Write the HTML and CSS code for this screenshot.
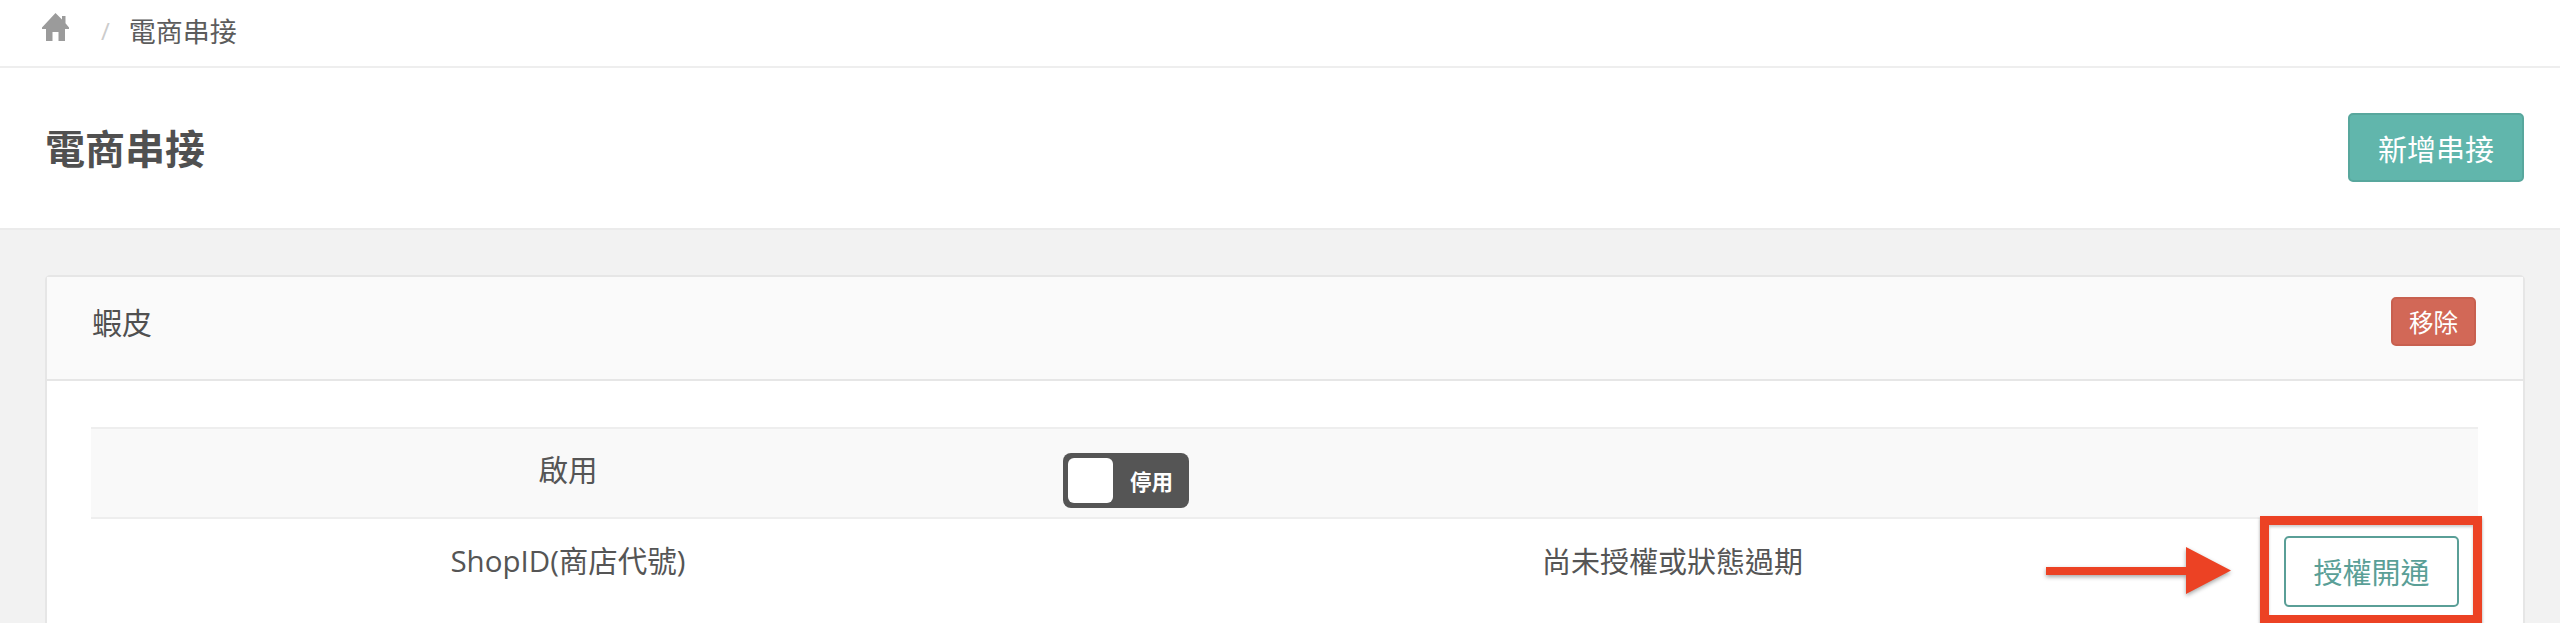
FILE: index.html
```html
<!DOCTYPE html>
<html lang="zh-TW">
<head>
    <meta charset="UTF-8">
    <meta name="viewport" content="width=device-width, initial-scale=1.0">
    <title>電商串接</title>
    <link rel="stylesheet" href="styles.css">
</head>
<body>
    <nav class="breadcrumb">
        <svg class="home-icon" viewBox="0 0 27 28" aria-hidden="true">
            <path d="M13.5 0 L20 6.6 V3 H23.5 V10.2 L27 14.5 V16 H23 V28 H16.5 V19 H10.5 V28 H4 V16 H0 V14.5 Z"/>
        </svg>
        <span class="crumb-sep">/</span>
        <span class="crumb-current">電商串接</span>
    </nav>

    <header class="page-head">
        <h1>電商串接</h1>
        <button class="btn btn-add">新增串接</button>
    </header>

    <main class="content">
        <section class="card">
            <div class="card-head">
                <span class="card-title">蝦皮</span>
                <button class="btn btn-remove">移除</button>
            </div>
            <div class="card-body">
                <div class="row row-striped">
                    <div class="cell-label">啟用</div>
                    <div class="cell-toggle">
                        <span class="toggle"><span class="toggle-knob"></span><span class="toggle-text">停用</span></span>
                    </div>
                </div>
                <div class="row">
                    <div class="cell-label cell-raised">ShopID(商店代號)</div>
                    <div class="cell-status cell-raised">尚未授權或狀態過期</div>
                    <div class="cell-action"><button class="btn btn-auth">授權開通</button></div>
                </div>
            </div>
        </section>
    </main>

    <!-- annotation drawn over the screenshot -->
    <svg class="note-arrow" viewBox="0 0 186 48" aria-hidden="true">
        <path d="M0 20 H140 V0 L185 23.5 L140 47 V28 H0 Z"/>
    </svg>
    <div class="note-box"></div>
</body>
</html>
```

FILE: styles.css
```css
html, body {
    margin: 0;
    padding: 0;
}
body {
    position: relative;
    height: 623px;
    overflow: hidden;
    background-color: #f2f2f2;
    color: #555;
    font-family: "Open Sans", "Noto Sans CJK TC", sans-serif;
}
button {
    font-family: inherit;
}

.breadcrumb {
    display: flex;
    align-items: center;
    height: 60px;
    padding: 0 0 6px 42px;
    background-color: #fff;
    border-bottom: 2px solid #eee;
}
.home-icon {
    width: 27px;
    height: 28px;
    margin-top: -6px;
    fill: #9b9b9b;
}
.crumb-sep {
    margin-left: 32px;
    color: #ccc;
    font-size: 24px;
}
.crumb-current {
    margin-left: 19px;
    font-size: 27px;
    color: #5c5c5c;
}

.page-head {
    display: flex;
    align-items: center;
    justify-content: space-between;
    height: 160px;
    padding: 0 36px 0 45px;
    background-color: #fff;
    border-bottom: 2px solid #ebebeb;
}
.page-head h1 {
    margin: 0 0 2px;
    font-size: 40px;
    font-weight: 600;
    color: #505050;
}

.btn {
    box-sizing: border-box;
    border-radius: 5px;
    cursor: pointer;
}
.btn-add {
    width: 176px;
    height: 69px;
    margin-top: -1px;
    background-color: #61b6ac;
    border: 2px solid #58a79d;
    color: #fff;
    font-size: 29px;
}
.btn-remove {
    width: 85px;
    height: 49px;
    background-color: #d26857;
    border: 2px solid #c8604f;
    color: #fff;
    font-size: 24.5px;
}
.btn-auth {
    width: 175px;
    height: 71px;
    background-color: #fff;
    border: 2px solid #5a9f97;
    color: #5a9f97;
    font-size: 29px;
}

.content {
    padding: 45px 35px 0 45px;
}
.card {
    background-color: #fff;
    border: 2px solid #e6e6e6;
    border-radius: 5px;
}
.card-head {
    display: flex;
    align-items: center;
    justify-content: space-between;
    height: 88px;
    padding: 0 47px 14px 45px;
    background-color: #fafafa;
    border-bottom: 2px solid #e6e6e6;
}
.card-title {
    font-size: 30px;
    color: #505050;
}
.card-body {
    padding: 46px 45px 0 44px;
}

.row {
    display: grid;
    grid-template-columns: 954px 1fr 210px;
    align-items: center;
    height: 104px;
    border-bottom: 2px solid #eee;
    font-size: 29.5px;
    color: #555;
}
.row-striped {
    height: 88px;
    background-color: #f9f9f9;
    border-top: 2px solid #eee;
}
.cell-label {
    text-align: center;
}
.cell-raised {
    margin-top: -23px;
}
.cell-status {
    padding-left: 32px;
    text-align: center;
    font-size: 29px;
}
.cell-action {
    display: flex;
    justify-content: flex-end;
    padding-right: 19px;
}
.cell-toggle {
    padding-left: 18px;
}
.row-striped .cell-label {
    margin-top: -9px;
}

.toggle {
    display: flex;
    align-items: center;
    box-sizing: border-box;
    width: 126px;
    height: 55px;
    padding-left: 5px;
    margin-top: 14px;
    background-color: #555;
    border-radius: 8px;
}
.toggle-knob {
    width: 45px;
    height: 45px;
    background-color: #fff;
    border-radius: 6px;
}
.toggle-text {
    margin-left: 17px;
    color: #fff;
    font-size: 21.5px;
    font-weight: 600;
}

.note-arrow {
    position: absolute;
    left: 2046px;
    top: 547px;
    width: 186px;
    height: 48px;
    fill: #ec4224;
    filter: drop-shadow(0 2px 2px rgba(0, 0, 0, 0.35));
}
.note-box {
    position: absolute;
    left: 2260px;
    top: 516px;
    box-sizing: border-box;
    width: 222px;
    height: 108px;
    border: 9px solid #ec4224;
    box-shadow: 0 2px 3px rgba(0, 0, 0, 0.35), inset 0 2px 3px rgba(0, 0, 0, 0.2);
}
```
